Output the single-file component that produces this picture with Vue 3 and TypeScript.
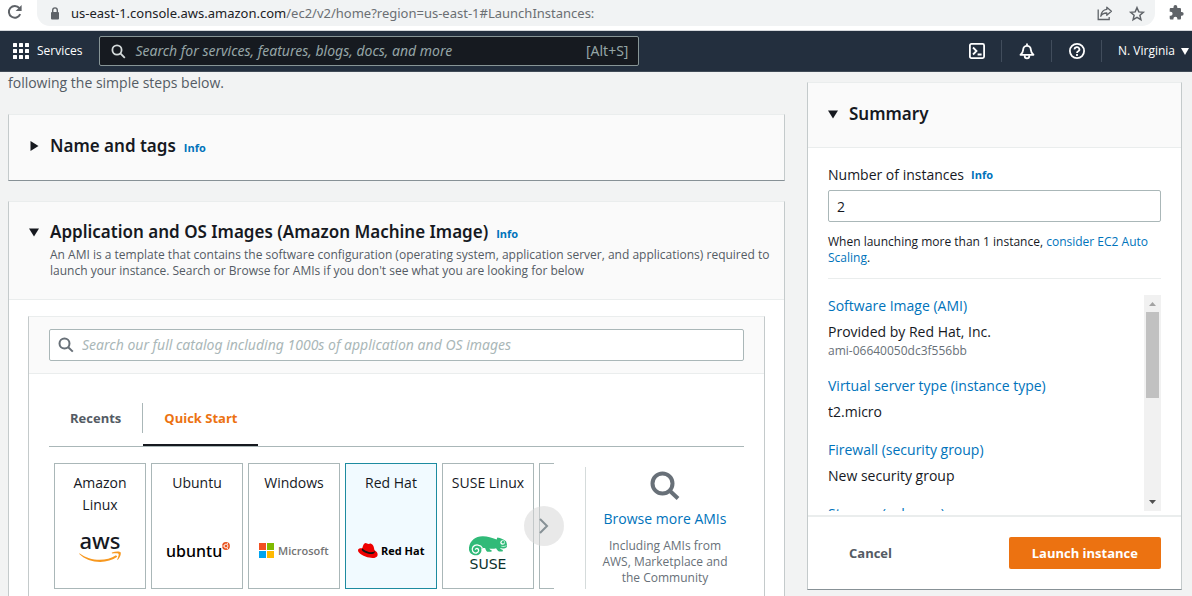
<script setup lang="ts">
import { ref } from 'vue'

interface OsImage {
  id: string
  label: string
}

interface SummaryItem {
  title: string
  value: string
  detail?: string
}

const images: OsImage[] = [
  { id: 'aws', label: 'Amazon Linux' },
  { id: 'ubuntu', label: 'Ubuntu' },
  { id: 'windows', label: 'Windows' },
  { id: 'redhat', label: 'Red Hat' },
  { id: 'suse', label: 'SUSE Linux' },
  { id: 'more', label: '' },
]

const summary: SummaryItem[] = [
  { title: 'Software Image (AMI)', value: 'Provided by Red Hat, Inc.', detail: 'ami-06640050dc3f556bb' },
  { title: 'Virtual server type (instance type)', value: 't2.micro' },
  { title: 'Firewall (security group)', value: 'New security group' },
  { title: 'Storage (volumes)', value: '' },
]

const selected = ref('redhat')
const tab = ref('quick')
const count = ref('2')
const consoleQuery = ref('')
const imageQuery = ref('')
</script>

<template>
  <div class="page">
    <div class="browser">
      <button class="plain reload" aria-label="Reload">
        <svg width="16" height="16" viewBox="0 0 16 16" fill="none" stroke="#5f6368" stroke-width="2">
          <path d="M13.2 10.2A5.9 5.9 0 1 1 12.4 4.1" />
          <path d="M14.6 1v6H8.6z" fill="#5f6368" stroke="none" />
        </svg>
      </button>
      <div class="address">
        <svg class="lock" width="10" height="13" viewBox="0 0 10 13">
          <rect x="1" y="5" width="8" height="7.4" rx="1" fill="#5f6368" />
          <path d="M2.7 5.5V3.2a2.3 2.3 0 0 1 4.6 0v2.3" fill="none" stroke="#5f6368" stroke-width="1.4" />
        </svg>
        <span class="url"><span class="host">us-east-1.console.aws.amazon.com</span>/ec2/v2/home?region=us-east-1#LaunchInstances:</span>
        <button class="plain" aria-label="Share">
          <svg width="16" height="15" viewBox="0 0 16 15" fill="none" stroke="#5f6368" stroke-width="1.3">
            <path d="M1.2 3.5v10h11v-2.4" />
            <path d="M9.8 1.2l4.6 4-4.6 4V7C7 6.9 5 7.800 3.800 10.200 4.200 6.600 6 3.800 9.800 3.400z" stroke-linejoin="round" />
          </svg>
        </button>
        <button class="plain star" aria-label="Bookmark">
          <svg width="16" height="15" viewBox="0 0 16 15" fill="none" stroke="#5f6368" stroke-width="1.5">
            <path d="M8 1.700l1.800 4.200 4.500.4-3.400 3 1 4.400L8 11.400l-3.900 2.300 1-4.400-3.400-3 4.500-.4z" />
          </svg>
        </button>
      </div>
      <button class="plain puzzle" aria-label="Extensions">
        <svg width="15" height="15" viewBox="0 0 15 15" fill="#5f6368">
          <path d="M12.800 7H12V4.200C12 3.400 11.400 3 10.800 3H8.300V1.900a1.900 1.900 0 0 0-3.800 0V3H2C1.200 3 .7 3.500.7 4.200v2.500h.9a2 2 0 0 1 0 4H.7v2.500c0 .8.600 1.300 1.300 1.300h2.400v-.8a2 2 0 0 1 4 0v.8h2.400c.7 0 1.200-.6 1.200-1.300v-2.500h.8A1.850 1.850 0 0 0 12.800 7z" />
        </svg>
      </button>
    </div>

    <header class="nav">
      <button class="plain services">
        <svg width="16" height="16" viewBox="0 0 16 16" fill="#fff">
          <template v-for="r in 3" :key="r">
            <rect v-for="c in 3" :key="c" :x="(c - 1) * 6" :y="(r - 1) * 6" width="4" height="4" rx="0.5" />
          </template>
        </svg>
        <span>Services</span>
      </button>
      <label class="nav-search">
        <svg width="15" height="15" viewBox="0 0 15 15" fill="none" stroke="#d5dbdb" stroke-width="1.800">
          <circle cx="6" cy="6" r="4.600" />
          <path d="M9.400 9.400l4.400 4.400" />
        </svg>
        <input v-model="consoleQuery" type="text" aria-label="Search services" placeholder="Search for services, features, blogs, docs, and more" />
        <span class="hint">[Alt+S]</span>
      </label>
      <div class="nav-tools">
        <button class="plain tool" aria-label="CloudShell">
          <svg width="16" height="16" viewBox="0 0 16 16" fill="none" stroke="#fff" stroke-width="1.800">
            <rect x="0.900" y="0.900" width="14.200" height="14.200" rx="1.500" />
            <path d="M4 4.500L7.500 8 4 11.500M8.600 11.500h4" />
          </svg>
        </button>
        <button class="plain tool" aria-label="Notifications">
          <svg width="16" height="17" viewBox="0 0 16 17" fill="none" stroke="#fff" stroke-width="1.800">
            <path d="M8 .5v2M1.500 11.800C3.700 10.400 4 8.800 4.200 6.600a3.800 3.800 0 0 1 7.600 0c.2 2.200.5 3.800 2.700 5.200z" stroke-linejoin="round" />
            <path d="M5.700 12.200v.900a2.300 2.300 0 0 0 4.600 0v-.9" />
          </svg>
        </button>
        <button class="plain tool" aria-label="Help">
          <svg width="16" height="16" viewBox="0 0 16 16" fill="none" stroke="#fff" stroke-width="1.800">
            <circle cx="8" cy="8" r="7.100" />
            <path d="M5.600 6.400a2.400 2.200 0 1 1 3.600 1.800C8.300 8.700 8 9 8 10" />
            <path d="M8 11v1.900" />
          </svg>
        </button>
        <button class="plain region">
          <span>N. Virginia</span>
          <svg width="8" height="7" viewBox="0 0 8 7"><path d="M0 0h8L4 7z" fill="#fff" /></svg>
        </button>
      </div>
    </header>

    <main class="main">
      <div class="left">
        <p class="intro">following the simple steps below.</p>

        <section class="panel name-panel">
          <button class="plain caret" aria-label="Expand name and tags">
            <svg width="9" height="12" viewBox="0 0 9 12"><path d="M.5 1v10L8.500 6z" fill="#16191f" /></svg>
          </button>
          <h2>Name and tags</h2>
          <a class="info" href="#">Info</a>
        </section>

        <section class="panel">
          <div class="ami-head">
            <div class="title-row">
              <button class="plain caret" aria-label="Collapse application and OS images">
                <svg width="10" height="9" viewBox="0 0 10 9"><path d="M0 .5h10L5 8.500z" fill="#16191f" /></svg>
              </button>
              <h2>Application and OS Images (Amazon Machine Image)</h2>
              <a class="info" href="#">Info</a>
            </div>
            <p class="desc">An AMI is a template that contains the software configuration (operating system, application server, and applications) required to launch your instance. Search or Browse for AMIs if you don't see what you are looking for below</p>
          </div>

          <div class="catalog">
            <div class="catalog-head">
              <label class="catalog-search">
                <svg width="16" height="16" viewBox="0 0 16 16" fill="none" stroke="#687078" stroke-width="2">
                  <circle cx="6.500" cy="6.500" r="5" />
                  <path d="M10.200 10.200l4.600 4.400" />
                </svg>
                <input v-model="imageQuery" type="text" aria-label="Search images" placeholder="Search our full catalog including 1000s of application and OS images" />
              </label>
            </div>

            <div class="catalog-body">
              <div class="tabs" role="tablist">
                <button class="plain tab" role="tab" :class="{ on: tab === 'recents' }" :aria-selected="tab === 'recents'" @click="tab = 'recents'">Recents</button>
                <span class="tab-rule"></span>
                <button class="plain tab" role="tab" :class="{ on: tab === 'quick' }" :aria-selected="tab === 'quick'" @click="tab = 'quick'">Quick Start</button>
              </div>

              <div class="choices">
                <div class="carousel">
                  <div class="cards">
                    <button v-for="os in images" :key="os.id" class="card" :class="{ selected: selected === os.id }" :aria-label="os.label || 'More images'" @click="selected = os.id">
                      <span class="card-label">{{ os.label }}</span>
                      <span class="logo">
                        <svg v-if="os.id === 'aws'" width="42" height="35" viewBox="0 0 42 35">
                          <text x="21" y="15" text-anchor="middle" class="aws-word">aws</text>
                          <path d="M.4 19.300c11 8.200 26.600 8.500 36.600 2l1.300 1.500C27.500 30.600 9.500 29.300.3 20z" fill="#f7981f" />
                          <path d="M33 18.600c3.300-1.400 7.600-1.500 8.600-.3.700 1.400-.5 5.300-2.700 7.500-.5.300-.8 0-.6-.5 1.100-2.800 1.700-4.600 1.300-5.300-.7-.8-3.300-.8-6.200-.5-.7 0-.8-.6-.4-.9z" fill="#f7981f" />
                        </svg>
                        <svg v-else-if="os.id === 'ubuntu'" width="66" height="20" viewBox="0 0 66 20">
                          <text x="2" y="16" class="ubuntu-word">ubuntu</text>
                          <circle cx="62" cy="5" r="3.900" fill="#e95420" />
                          <circle cx="62" cy="5" r="1.900" fill="none" stroke="#fff" stroke-width="0.900" />
                          <path d="M59.800 5h-1.500M63.200 3l.8-1.400M63.200 7l.8 1.400" stroke="#fff" stroke-width="0.800" />
                        </svg>
                        <svg v-else-if="os.id === 'windows'" width="72" height="16" viewBox="0 0 72 16">
                          <path d="M1 0h7v7H1z" fill="#f25022" />
                          <path d="M9 0h7v7H9z" fill="#7fba00" />
                          <path d="M1 8h7v7H1z" fill="#00a4ef" />
                          <path d="M9 8h7v7H9z" fill="#ffb900" />
                          <text x="20" y="12" class="ms-word">Microsoft</text>
                        </svg>
                        <svg v-else-if="os.id === 'redhat'" width="68" height="18" viewBox="0 0 68 18">
                          <path d="M5.300 6.300C6 3.500 7 1.100 8.500 1.100c1.300 0 1.800.9 3 .9 1 0 1.500-.7 2.600-.3 2.400.8 2.900 4 3.400 6.500 2 .9 3.500 3 3.100 5-.4 2.700-4.600 3.300-8.300 2.400C7.500 14.500.8 11.400 1 8.200 1.100 6.400 3.300 6 5.300 6.300z" fill="#e00" />
                          <path d="M5.300 6.200l-.6 1.800c1.500 2.600 8 4.700 11.300 3.800 1.200-.3 1.800-1 1.700-2l-.3-1.600c.1 1-.5 1.700-1.800 1.900-3.200.5-8.500-1.300-10.300-3.900z" fill="#151515" />
                          <text x="24" y="13" class="rh-word">Red Hat</text>
                        </svg>
                        <svg v-else-if="os.id === 'suse'" width="42" height="39" viewBox="0 -3 42 39">
                          <path d="M2 12.500C3 5.500 8.500 1.300 15.500 1.200c5-.1 9 1.600 14.200 3.300l.6-1.900c3.600.6 6.600 2.100 8.700 3.700 1 2.300 1.300 4.300.7 6-.8 1-2.300 1.200-4 1.200l-2.600-.5c.5 1.100 1.400 1.600 2.400 1.700.6.600.5 1.400-.2 1.900h-3.200c-1.500-.9-2.300-2.200-3-3.400-2.300.7-4.500.7-6.600.4.300 1 1.200 1.500 2 1.700.4.600.2 1.100-.3 1.400h-4c-1.200-.8-1.600-2.300-2.100-3.600-1.700-.4-2.900-.1-4 .3 1.300 3.100-1.100 6.900-5 6.900C4.600 20.300 1.400 17.200 2 12.500z" fill="#30ba78" />
                          <path d="M15.300 13C13.800 9.600 8.300 8.800 5.900 12c-2 3.200.5 6.600 3.500 6 2.700-.6 3-4 .8-4.500-1-.2-1.800.4-1.800 1.300" fill="none" stroke="#fff" stroke-width="1.300" />
                          <circle cx="35.600" cy="7.500" r="2.300" fill="#fff" />
                          <circle cx="36" cy="7.300" r="1.300" fill="#30ba78" />
                          <path d="M34.400 11.300c2 .5 3.700.2 5-.8" fill="none" stroke="#fff" stroke-width="0.700" />
                          <text x="21" y="34" text-anchor="middle" class="suse-word">SUSE</text>
                        </svg>
                      </span>
                    </button>
                  </div>
                  <button class="plain next" aria-label="Next images">
                    <svg width="10" height="16" viewBox="0 0 10 16" fill="none" stroke="#879196" stroke-width="2"><path d="M1 1l7 7-7 7" /></svg>
                  </button>
                </div>

                <div class="browse">
                  <svg width="30" height="30" viewBox="0 0 30 30" fill="none" stroke="#687078" stroke-width="4">
                    <circle cx="12.500" cy="12.500" r="10" />
                    <path d="M19.500 19.500l8.500 8" />
                  </svg>
                  <a href="#">Browse more AMIs</a>
                  <p>Including AMIs from AWS, Marketplace and the Community</p>
                </div>
              </div>
            </div>
          </div>
        </section>
      </div>

      <aside class="panel summary">
        <div class="summary-head">
          <button class="plain caret" aria-label="Collapse summary">
            <svg width="10" height="9" viewBox="0 0 10 9"><path d="M0 .5h10L5 8.500z" fill="#16191f" /></svg>
          </button>
          <h2>Summary</h2>
        </div>
        <div class="summary-body">
          <div class="field-label">
            <label for="count">Number of instances</label>
            <a class="info" href="#">Info</a>
          </div>
          <input id="count" v-model="count" class="count" type="text" />
          <p class="note">When launching more than 1 instance, <a href="#">consider EC2 Auto Scaling</a>.</p>
          <div class="scroll">
            <div class="items">
              <div v-for="item in summary" :key="item.title" class="item">
                <a href="#">{{ item.title }}</a>
                <p>{{ item.value }}</p>
                <small v-if="item.detail">{{ item.detail }}</small>
              </div>
            </div>
            <div class="track" aria-hidden="true">
              <svg width="17" height="17" viewBox="0 0 17 17"><path d="M5 11h7L8.500 7z" fill="#a3a3a3" /></svg>
              <div class="thumb"></div>
              <svg width="17" height="17" viewBox="0 0 17 17"><path d="M5 6h7l-3.500 4z" fill="#505050" /></svg>
            </div>
          </div>
        </div>
        <div class="actions">
          <button class="plain cancel">Cancel</button>
          <button class="launch">Launch instance</button>
        </div>
      </aside>
    </main>
  </div>
</template>

<style>
body {
  margin: 0;
}
</style>

<style scoped>
.page {
  height: 100vh;
  overflow: hidden;
  display: flex;
  flex-direction: column;
  background: #f2f3f3;
  color: #16191f;
  font-family: "Open Sans", "Noto Sans", sans-serif;
  font-size: 14px;
  line-height: 22px;
}
.page *,
.page *::before {
  box-sizing: border-box;
}
h2,
p {
  margin: 0;
}
a {
  color: #0073bb;
  text-decoration: none;
}
svg {
  display: block;
  flex: none;
  overflow: visible;
}
button,
input {
  font: inherit;
  color: inherit;
}
.plain {
  border: 0;
  padding: 0;
  background: none;
  cursor: pointer;
}

/* Browser toolbar */
.browser {
  flex: none;
  height: 31px;
  display: flex;
  align-items: flex-start;
  background: #fff;
  border-bottom: 1px solid #d5d8dc;
}
.reload {
  margin: 4px 14px 0 7px;
}
.address {
  flex: 1;
  height: 26px;
  display: flex;
  align-items: center;
  padding: 0 10px 0 13px;
  border-radius: 0 0 13px 13px;
  background: #f1f3f4;
}
.url {
  flex: 1;
  margin-left: 11px;
  font-family: "Noto Sans", sans-serif;
  font-size: 13px;
  color: #6b6f73;
}
.host {
  color: #202124;
}
.star {
  margin-left: 16px;
}
.puzzle {
  margin: 5px 8px 0 14px;
}

/* Console navigation */
.nav {
  flex: none;
  height: 41px;
  display: flex;
  align-items: center;
  background: #232f3e;
  border-bottom: 1px solid #414b57;
  color: #fff;
  font-size: 12px;
}
.services {
  display: flex;
  align-items: center;
  gap: 8px;
  margin: 0 17px 0 13px;
  font-weight: 500;
}
.nav-search {
  width: 540px;
  height: 30px;
  display: flex;
  align-items: center;
  padding: 0 10px 0 11px;
  border: 1px solid #879596;
  border-radius: 2px;
  background: #161a20;
  font-family: "Noto Sans", sans-serif;
  font-size: 14px;
}
.nav-search input {
  flex: 1;
  min-width: 0;
  margin-left: 9px;
  padding: 0;
  border: 0;
  outline: 0;
  background: none;
}
.nav-search input::placeholder {
  color: #95a5a6;
  font-style: italic;
  opacity: 1;
}
.hint {
  color: #95a5a6;
}
.nav-tools {
  display: flex;
  align-items: center;
  margin-left: auto;
}
.tool {
  width: 50px;
  height: 22px;
  display: flex;
  align-items: center;
  justify-content: center;
  border-right: 1px solid #414d5c;
}
.region {
  display: flex;
  align-items: center;
  gap: 6px;
  padding: 0 3px 0 16px;
  font-weight: 500;
}

/* Page columns */
.main {
  flex: 1;
  min-height: 0;
  display: grid;
  grid-template-columns: minmax(0, 1fr) 375px;
  gap: 22px;
  align-items: start;
  padding: 0 10px 0 8px;
}
.left {
  display: flex;
  flex-direction: column;
  gap: 20px;
}
.intro {
  color: #545b64;
}
.panel {
  border: 1px solid #c4cacb;
  border-top-color: #eaeded;
  border-bottom-color: #879196;
  background: #fff;
}
h2 {
  font-family: "Noto Sans", sans-serif;
  font-size: 17px;
  line-height: 22px;
  font-weight: 600;
}
.info {
  font-size: 11px;
  line-height: 16px;
  font-weight: 700;
}
.caret {
  width: 10px;
  display: flex;
  justify-content: center;
}
.name-panel {
  display: flex;
  align-items: center;
  padding: 20px 20px 23px;
  background: #fafafa;
}
.name-panel .info,
.title-row .info {
  margin: 4px 0 0 8px;
}
.name-panel h2,
.title-row h2 {
  margin-left: 11px;
}
.ami-head {
  padding: 19px 8px 20px 20px;
  background: #fafafa;
  border-bottom: 1px solid #eaeded;
}
.title-row {
  display: flex;
  align-items: center;
}
.desc {
  margin: 4px 0 0 21px;
  font-size: 12px;
  line-height: 16px;
  color: #545b64;
}
.catalog {
  margin: 16px 19px 20px;
  border: 1px solid #c4cacb;
  border-top-color: #eaeded;
}
.catalog-head {
  padding: 12px 20px;
  background: #fafafa;
  border-bottom: 1px solid #eaeded;
}
.catalog-search {
  height: 32px;
  display: flex;
  align-items: center;
  padding: 0 8px;
  border: 1px solid #aab7b8;
  border-radius: 2px;
  background: #fff;
  font-family: "Noto Sans", sans-serif;
}
.catalog-search input {
  flex: 1;
  min-width: 0;
  margin-left: 8px;
  padding: 0;
  border: 0;
  outline: 0;
  background: none;
}
.catalog-search input::placeholder {
  color: #aab7b8;
  font-style: italic;
  opacity: 1;
}
.catalog-body {
  padding: 16px 20px 20px;
}
.tabs {
  display: flex;
  align-items: center;
  height: 57px;
  border-bottom: 1px solid #aab7b8;
}
.tab {
  height: 56px;
  padding: 2px 21px 0;
  border-bottom: 2px solid transparent;
  font-size: 13px;
  font-weight: 700;
  color: #545b64;
}
.tab-rule {
  width: 1px;
  height: 30px;
  background: #aab7b8;
}
.tab.on {
  color: #ec7211;
  border-bottom-color: #16191f;
}
.choices {
  display: flex;
  margin-top: 16px;
}
.carousel {
  position: relative;
  flex: 1;
  min-width: 0;
  margin-right: 31px;
  padding-left: 5px;
}
.cards {
  display: flex;
  gap: 5px;
  overflow: hidden;
}
.card {
  flex: none;
  width: 92px;
  height: 126px;
  display: flex;
  flex-direction: column;
  align-items: center;
  justify-content: space-between;
  padding: 8px 8px 14px;
  border: 1px solid #aab7b8;
  background: #fff;
  cursor: pointer;
}
.card.selected {
  background: #f1faff;
  border-color: #1d8ba0;
}
.logo {
  height: 46px;
  display: flex;
  align-items: center;
}
.aws-word {
  font: 500 22px "Noto Sans", sans-serif;
  fill: #16191f;
}
.ubuntu-word {
  font: 500 16px "Noto Sans", sans-serif;
  fill: #000;
}
.ms-word {
  font: 600 11px "Open Sans", sans-serif;
  fill: #737373;
}
.rh-word {
  font: 700 11px "Open Sans", sans-serif;
  fill: #000;
}
.suse-word {
  font: 400 14px "DejaVu Sans", sans-serif;
  fill: #0c322c;
}
.next {
  position: absolute;
  top: 43px;
  right: -10px;
  width: 40px;
  height: 40px;
  display: flex;
  align-items: center;
  justify-content: center;
  border-radius: 50%;
  background: rgba(215, 215, 215, 0.55);
}
.browse {
  flex: none;
  width: 159px;
  display: flex;
  flex-direction: column;
  align-items: center;
  margin-top: 4px;
  padding: 4px 10px 0;
  border-left: 1px solid #d5dbdb;
  text-align: center;
}
.browse a {
  margin-top: 7px;
}
.browse p {
  margin-top: 8px;
  font-size: 12px;
  line-height: 16px;
  color: #687078;
}

/* Summary */
.summary {
  margin-top: 10px;
}
.summary-head {
  display: flex;
  align-items: center;
  gap: 11px;
  padding: 20px 20px 22px;
  background: #fafafa;
  border-bottom: 1px solid #eaeded;
}
.summary-body {
  padding: 16px 20px 4px;
}
.field-label {
  display: flex;
  align-items: center;
  gap: 7px;
}
.count {
  display: block;
  width: 100%;
  height: 32px;
  margin-top: 4px;
  padding: 0 8px;
  border: 1px solid #aab7b8;
  border-radius: 2px;
  background: #fff;
}
.note {
  margin-top: 12px;
  padding-bottom: 12px;
  border-bottom: 1px solid #eaeded;
  font-size: 12px;
  line-height: 16px;
}
.scroll {
  display: flex;
  height: 216px;
  margin-top: 16px;
  overflow: hidden;
}
.items {
  flex: 1;
}
.item {
  margin-bottom: 16px;
}
.item p {
  margin-top: 4px;
}
.item small {
  display: block;
  font-size: 12px;
  line-height: 16px;
  color: #687078;
}
.track {
  width: 17px;
  display: flex;
  flex-direction: column;
  align-items: center;
  background: #f1f1f1;
}
.thumb {
  width: 13px;
  height: 86px;
  margin-bottom: auto;
  background: #c1c1c1;
}
.actions {
  display: flex;
  align-items: center;
  justify-content: space-between;
  padding: 20px 20px 20px 41px;
  border-top: 2px solid #eaeded;
  font-size: 13px;
  font-weight: 700;
}
.cancel {
  color: #545b64;
}
.launch {
  height: 32px;
  padding: 0 23px;
  border: 0;
  border-radius: 2px;
  background: #ec7211;
  color: #fff;
  cursor: pointer;
}
</style>
